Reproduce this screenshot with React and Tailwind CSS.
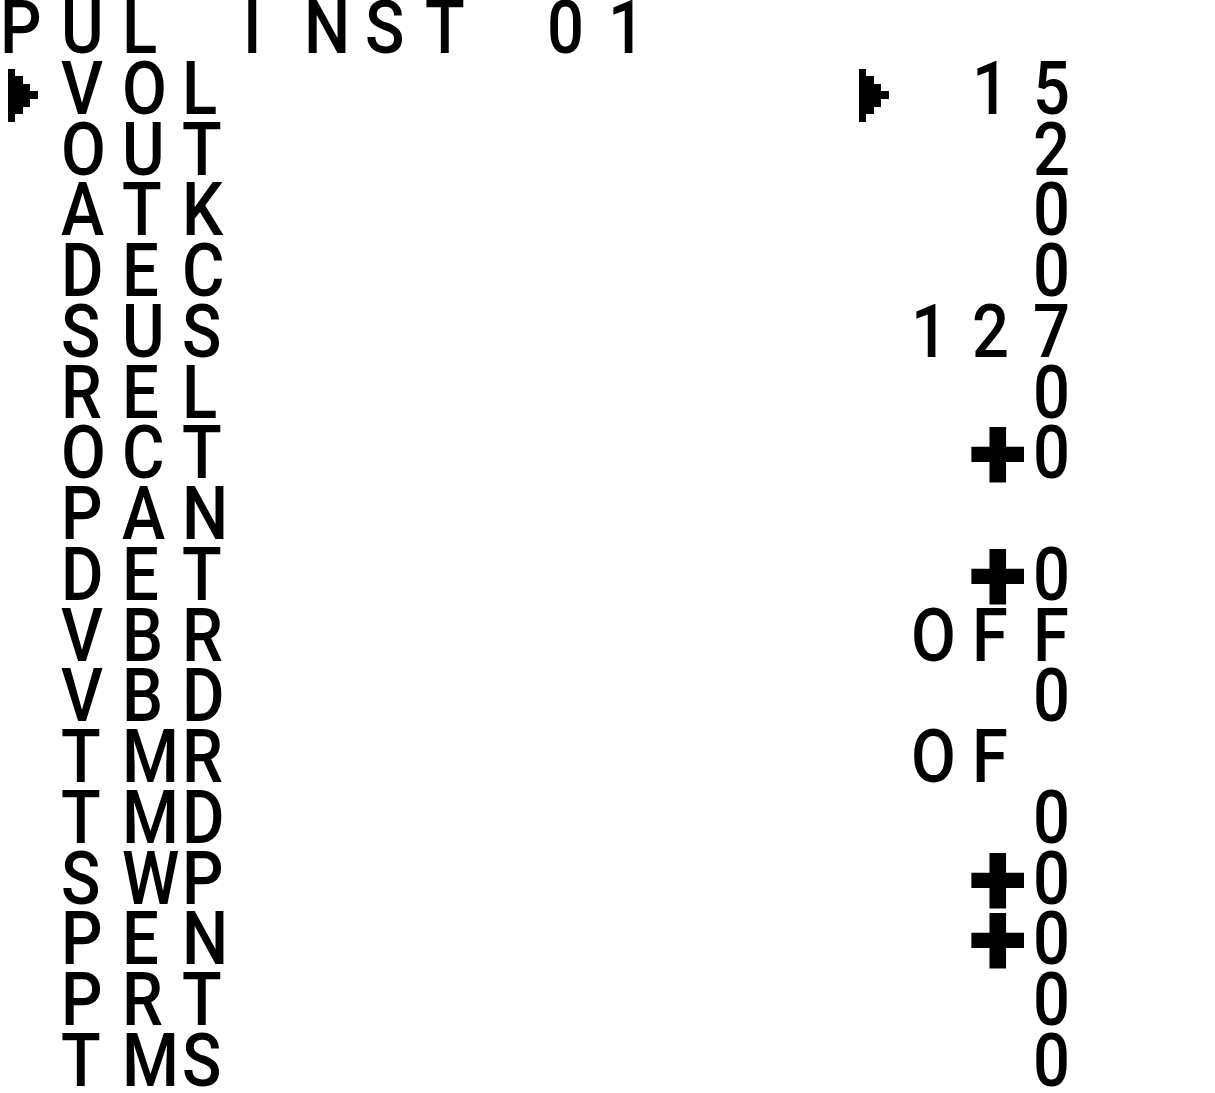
import React from "react";

// instrument screen, 20 x 18 tiles, each tile 60.75px square
const params = [
  ["VOL", "15", true],
  ["OUT", "2"],
  ["ATK", "0"],
  ["DEC", "0"],
  ["SUS", "127"],
  ["REL", "0"],
  ["OCT", "+0"],
  ["PAN", ""],
  ["DET", "+0"],
  ["VBR", "OFF"],
  ["VBD", "0"],
  ["TMR", "OF "],
  ["TMD", "0"],
  ["SWP", "+0"],
  ["PEN", "+0"],
  ["PRT", "0"],
  ["TMS", "0"],
];

const makeRow = (label, value, selected) => {
  const row = Array(20).fill(" ");
  if (selected) {
    row[0] = ">";
    row[14] = ">";
  }
  label.split("").forEach((c, i) => (row[1 + i] = c));
  const start = 18 - value.length;
  value.split("").forEach((c, i) => (row[start + i] = c));
  return row;
};

const title = "PUL INST 01".padEnd(20, " ").split("");
const rows = [title, ...params.map(([l, v, s]) => makeRow(l, v, s))];

const Arrow = () => (
  <svg viewBox="0 0 8 8" className="h-full w-full" shapeRendering="crispEdges">
    <rect x="1" y="1" width="1" height="7" fill="#000" />
    <rect x="2" y="2" width="1" height="5" fill="#000" />
    <rect x="3" y="3" width="1" height="3" fill="#000" />
    <rect x="4" y="4" width="1" height="1" fill="#000" />
  </svg>
);

const Cell = ({ ch }) => {
  if (ch === ">")
    return (
      <div className="h-[60.75px] w-[60.75px]">
        <Arrow />
      </div>
    );
  if (ch === "+")
    return (
      <div className="flex h-[60.75px] w-[60.75px] items-start justify-start overflow-visible">
        <span className="-ml-[3px] mt-[-26px] text-[108px] font-black leading-[108px]">+</span>
      </div>
    );
  return (
    <div className="h-[60.75px] w-[60.75px] overflow-visible whitespace-pre text-[74px] font-medium leading-[55px]">
      <span className="inline-block origin-left scale-x-[0.88]">{ch}</span>
    </div>
  );
};

export default function App() {
  return (
    <div className="h-[1093px] w-[1215px] overflow-hidden bg-white font-[family-name:Roboto,sans-serif] text-black">
      <div className="grid grid-cols-[repeat(20,60.75px)] grid-rows-[repeat(18,60.75px)]">
        {rows.map((row, r) =>
          row.map((ch, c) => <Cell key={r + "-" + c} ch={ch} />)
        )}
      </div>
    </div>
  );
}
